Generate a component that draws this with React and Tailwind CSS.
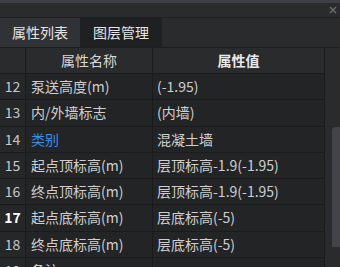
import React from "react";

const rows = [
  { no: "12", name: "泵送高度(m)", value: "(-1.95)" },
  { no: "13", name: "内/外墙标志", value: "(内墙)" },
  { no: "14", name: "类别", value: "混凝土墙", link: true },
  { no: "15", name: "起点顶标高(m)", value: "层顶标高-1.9(-1.95)" },
  { no: "16", name: "终点顶标高(m)", value: "层顶标高-1.9(-1.95)" },
  { no: "17", name: "起点底标高(m)", value: "层底标高(-5)", bold: true },
  { no: "18", name: "终点底标高(m)", value: "层底标高(-5)" },
  { no: "19", name: "备注", value: "" },
];

const App = () => {
  return (
    <div
      className="w-[340px] h-[267px] overflow-hidden bg-[#232426] text-[#cfcfcf] flex flex-col"
      style={{ fontFamily: '"Noto Sans CJK SC", "Noto Sans", sans-serif' }}
    >
      {/* window top */}
      <div className="h-[3px] shrink-0 bg-[#3c4046]" />
      <div className="h-[14px] shrink-0 bg-[#2a2b2d] flex items-center justify-end pr-[3px]">
        <svg width="8" height="8" viewBox="0 0 8 8">
          <path d="M1 1 L7 7 M7 1 L1 7" stroke="#6b6c6e" strokeWidth="1.4" />
        </svg>
      </div>
      <div className="h-px shrink-0 bg-[#1d1e1f]" />

      {/* tabs */}
      <div className="h-[29px] shrink-0 flex bg-[#2a2b2d] text-[14px]">
        <div className="w-[80px] flex items-center justify-center bg-[#313235] text-[#e6e6e6]">
          属性列表
        </div>
        <div className="w-[82px] flex items-center justify-center bg-[#1f2022] text-[#e6e6e6]">
          图层管理
        </div>
        <div className="flex-1" />
      </div>

      {/* table */}
      <div className="flex flex-1 min-h-0 border-t border-[#1d1e1f]">
        <div className="w-[325px] shrink-0 flex flex-col">
          <div className="h-[26px] shrink-0 flex bg-[#2a2b2d] border-b border-[#1b1b1c] text-[14px] text-[#d8d8d8]">
            <div className="w-[26px] border-r border-[#1b1b1c]" />
            <div className="w-[127px] border-r border-[#1b1b1c] flex items-center justify-center">
              属性名称
            </div>
            <div className="flex-1 border-r border-[#1b1b1c] flex items-center justify-center font-bold text-[#e8e8e8]">
              属性值
            </div>
          </div>
          {rows.map((r) => (
            <div
              key={r.no}
              className="h-[26.3px] shrink-0 flex border-b border-[#1b1b1c] text-[14px] leading-[25px]"
            >
              <div
                className={
                  "w-[26px] shrink-0 text-center border-r border-[#1b1b1c] bg-[#262729] " +
                  (r.bold ? "font-bold text-white" : "text-[#c8c8c8]")
                }
              >
                {r.no}
              </div>
              <div
                className={
                  "w-[127px] shrink-0 pl-[5px] border-r border-[#1b1b1c] whitespace-nowrap " +
                  (r.link ? "text-[#3a8ee6]" : "text-[#cfcfcf]")
                }
              >
                {r.name}
              </div>
              <div className="flex-1 pl-[4px] border-r border-[#1b1b1c] whitespace-nowrap text-[#cfcfcf]">
                {r.value}
              </div>
            </div>
          ))}
        </div>
        {/* scrollbar */}
        <div className="flex-1 bg-[#2a2b2d] pt-[79px] pl-[7px]">
          <div className="h-[120px] bg-[#434447] rounded-tl-[4px]" />
        </div>
      </div>
    </div>
  );
};

export default App;
